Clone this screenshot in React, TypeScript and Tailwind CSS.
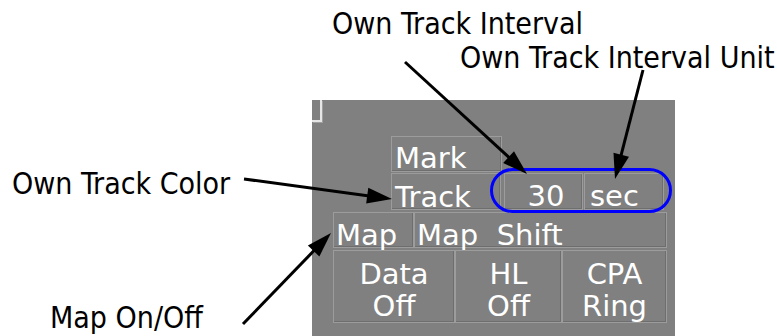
import React from "react";

type ArrowProps = { x1: number; y1: number; x2: number; y2: number; len?: number; hw?: number };

function Arrow({ x1, y1, x2, y2, len = 25, hw = 8 }: ArrowProps) {
  const dx = x2 - x1;
  const dy = y2 - y1;
  const d = Math.hypot(dx, dy);
  const ux = dx / d;
  const uy = dy / d;
  const bx = x2 - ux * len;
  const by = y2 - uy * len;
  const px = -uy;
  const py = ux;
  const pts = `${x2},${y2} ${bx + px * hw},${by + py * hw} ${bx - px * hw},${by - py * hw}`;
  return (
    <g>
      <line x1={x1} y1={y1} x2={bx + ux * 2} y2={by + uy * 2} stroke="#000" strokeWidth={3} />
      <polygon points={pts} fill="#000" />
    </g>
  );
}

const btn =
  "box-border flex border border-[#9c9c9c] shadow-[inset_-1px_-1px_0_#6e6e6e] text-white whitespace-pre";

export default function App() {
  const btnFont = { fontFamily: '"DejaVu Sans", sans-serif' };
  const labelFont = { fontFamily: '"DejaVu Sans Condensed", "DejaVu Sans", sans-serif' };
  return (
    <div className="relative w-[777px] h-[336px] bg-white overflow-hidden box-border pt-[100px] pl-[312px]">
      {/* Panel */}
      <div
        className="w-[363px] h-[236px] bg-[#808080] flex flex-col text-[29px]"
        style={btnFont}
      >
        <div className="w-[10px] h-[22px] border-r-2 border-b-2 border-[#e6e6e6] shadow-[1px_1px_0_#a0a0a0]" />

        <div className="ml-[79px] mt-[14px] flex">
          <div className={btn + " w-[111px] h-[36px] pl-[3px] pt-[6px] leading-[30px]"}>Mark</div>
        </div>

        <div className="ml-[79px] mt-[1px] flex h-[37px] leading-[30px]">
          <div className={btn + " w-[110px] h-[37px] pl-[3px] pt-[8px]"}>Track</div>
          <div className={btn + " ml-[3px] w-[79px] h-[37px] justify-center pl-[5px] pt-[7px]"}>30</div>
          <div className={btn + " ml-[1px] w-[80px] h-[37px] pl-[5px] pt-[7px]"}>sec</div>
        </div>

        <div className="ml-[21px] mt-[2px] flex h-[36px] leading-[30px]">
          <div className={btn + " w-[81px] h-[36px] pl-[2px] pt-[7px]"}>Map</div>
          <div className={btn + " w-[253px] h-[36px] pl-[2px] pt-[7px]"}>{"Map  Shift"}</div>
        </div>

        <div className="ml-[21px] mt-[2px] flex h-[73px] leading-[32px]">
          <div className={btn + " w-[122px] h-[73px] flex-col items-center pt-[7px]"}>
            <span>Data</span>
            <span>Off</span>
          </div>
          <div className={btn + " w-[107px] h-[73px] flex-col items-center pt-[7px]"}>
            <span>HL</span>
            <span>Off</span>
          </div>
          <div className={btn + " w-[105px] h-[73px] flex-col items-center pt-[7px]"}>
            <span>CPA</span>
            <span>Ring</span>
          </div>
        </div>
      </div>

      {/* Highlight around interval fields */}
      <div className="absolute left-[490px] top-[168px] w-[182px] h-[45px] box-border border-[3px] border-[#0000ff] rounded-[23px]" />

      {/* Annotation labels */}
      <div className="absolute left-[332px] top-[9px] text-[30px] leading-[30px] text-black whitespace-nowrap" style={labelFont}>
        Own Track Interval
      </div>
      <div className="absolute left-[460px] top-[43px] text-[30px] leading-[30px] text-black whitespace-nowrap" style={labelFont}>
        Own Track Interval Unit
      </div>
      <div className="absolute left-[12px] top-[169px] text-[30px] leading-[30px] text-black whitespace-nowrap" style={labelFont}>
        Own Track Color
      </div>
      <div className="absolute left-[50px] top-[303px] text-[30px] leading-[30px] text-black whitespace-nowrap" style={labelFont}>
        Map On/Off
      </div>

      {/* Arrows */}
      <svg className="absolute left-0 top-0 pointer-events-none" width={777} height={336} viewBox="0 0 777 336">
        <Arrow x1={405} y1={62} x2={527} y2={174} />
        <Arrow x1={643} y1={70} x2={615} y2={179} />
        <Arrow x1={244} y1={179} x2={392} y2={199} />
        <Arrow x1={243} y1={324} x2={331} y2={233} />
      </svg>
    </div>
  );
}
